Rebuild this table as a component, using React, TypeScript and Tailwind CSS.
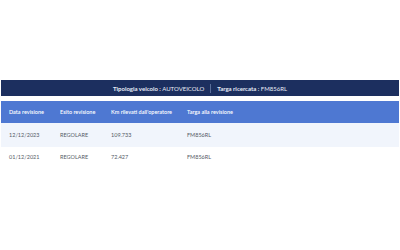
const rows = [
  { data: "12/12/2023", esito: "REGOLARE", km: "109.733", targa: "FM856RL" },
  { data: "01/12/2021", esito: "REGOLARE", km: "72.427", targa: "FM856RL" },
];

const cols = "grid grid-cols-[51px_51px_76px_1fr] pl-[8px]";

export default function App() {
  return (
    <div className="w-[400px] h-[250px] bg-white px-[1px] pt-[80px] font-['Lato','Open_Sans',sans-serif] lining-nums">
      {/* Search summary */}
      <div className="h-[16px] bg-[#1c2f5f] flex items-center justify-center text-[6px] text-[#e8edf7]">
        <span>
          <span className="font-bold">Tipologia veicolo :</span> AUTOVEICOLO
        </span>
        <span className="mx-[6px] h-[9px] border-l border-[#5a6e9a]" />
        <span>
          <span className="font-bold">Targa ricercata :</span> FM856RL
        </span>
      </div>

      {/* Table */}
      <div className="mt-[5px]">
        <div className={`${cols} h-[22px] items-center bg-[#4e78d2] text-[5.5px] font-semibold text-white`}>
          <span>Data revisione</span>
          <span>Esito revisione</span>
          <span>Km rilevati dall'operatore</span>
          <span>Targa alla revisione</span>
        </div>
        {rows.map((r, i) => (
          <div
            key={i}
            className={`${cols} ${i === 0 ? "h-[24px] bg-[#f1f5fc]" : "h-[21px] bg-white"} items-center text-[5.5px] text-[#555b66]`}
          >
            <span>{r.data}</span>
            <span>{r.esito}</span>
            <span>{r.km}</span>
            <span>{r.targa}</span>
          </div>
        ))}
      </div>
    </div>
  );
}
